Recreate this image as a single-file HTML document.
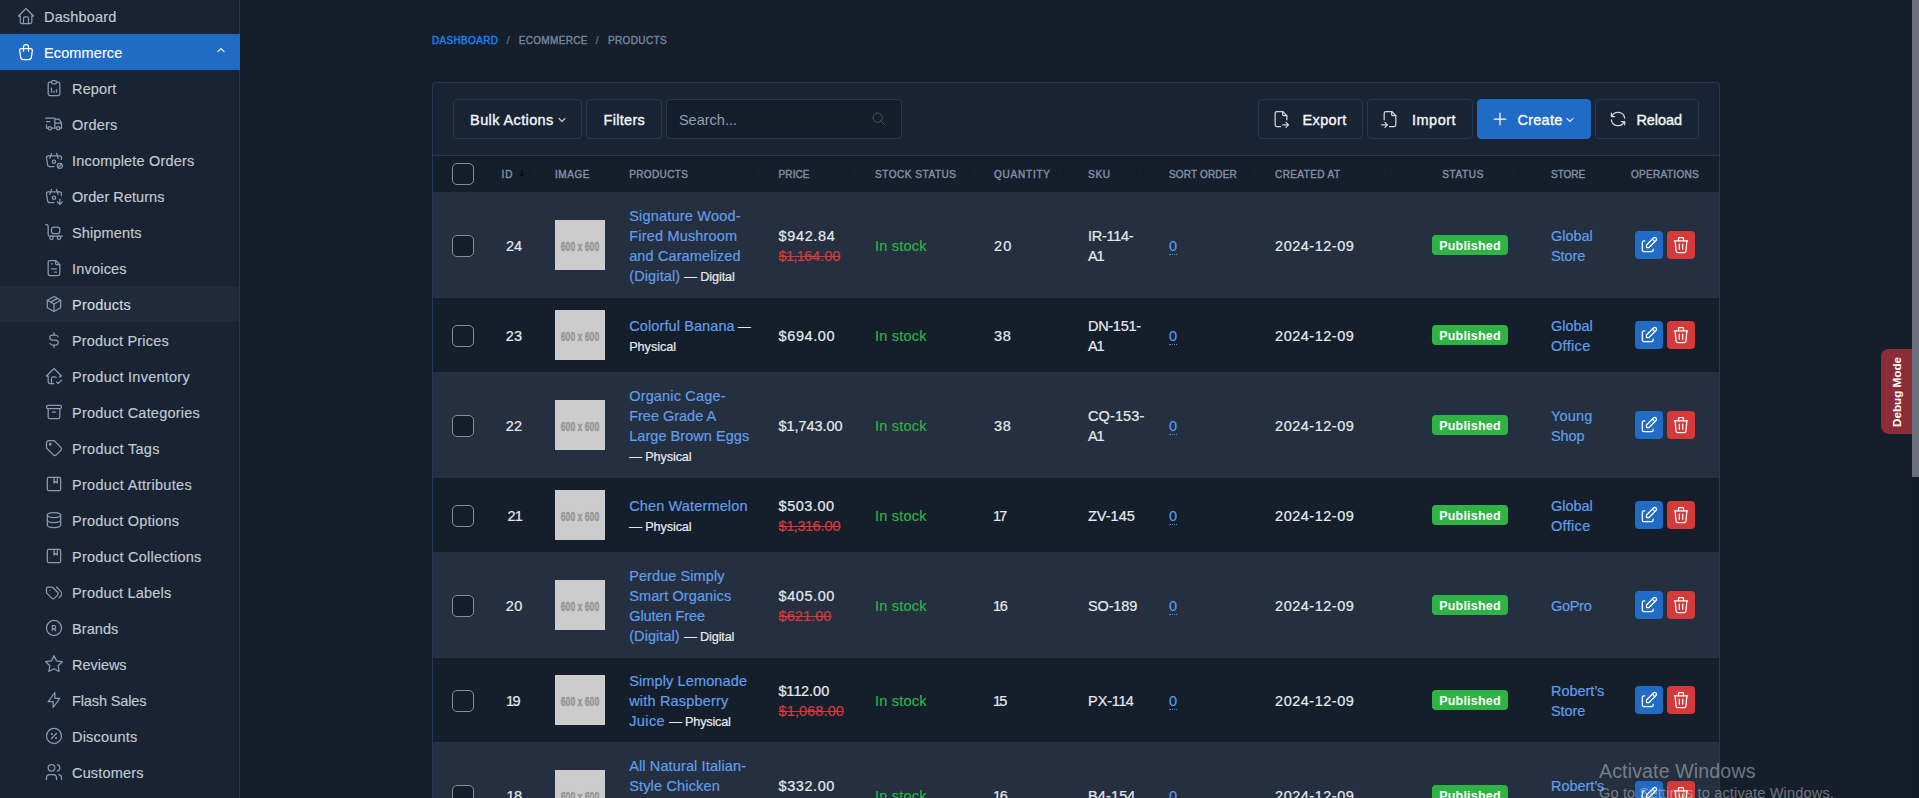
<!DOCTYPE html>
<html lang="en">
<head>
<meta charset="utf-8">
<title>Products</title>
<style>
*{box-sizing:border-box;margin:0;padding:0}
html,body{width:1919px;height:798px;overflow:hidden;background:#151f2c}
body{font-family:"Liberation Sans",sans-serif;font-size:14.5px;color:#dce1e7;position:relative;-webkit-font-smoothing:antialiased}
svg.ic{display:block;flex:none}
i{font-style:normal}
/* sidebar */
#sb{position:absolute;left:0;top:0;width:240px;height:798px;background:#182433;border-right:1px solid #25384f;overflow:visible}
.nav{position:absolute;left:0;width:240px;height:36px;display:flex;align-items:center;color:#c3c9d2;-webkit-text-stroke-width:0.15px;white-space:nowrap;font-size:14.5px}
.nav svg{color:#8c99ae;margin-right:8px}
.nav.top{padding-left:16px}
.nav.sub{padding-left:44px;width:239px}
.nav.act{background:#206bc4;color:#fff}
.nav.act svg{color:#fff}
.nav.act svg.chev{position:absolute;left:214.7px;top:10.3px;margin:0;opacity:.85}
.nav.cur{background:#1f2b3b;color:#d3d8df}
.nav span{position:relative;top:0.5px}
/* breadcrumb */
.bc{position:absolute;top:32.9px;height:16px;line-height:16px;font-size:10px;font-weight:normal;-webkit-text-stroke-width:0.4px;color:#74839c;white-space:nowrap}
.bc.a{color:#1883f6}
.bc.s{font-weight:normal;-webkit-text-stroke-width:0;font-size:11.5px;top:32.4px}
/* card */
#card{position:absolute;left:432px;top:82px;width:1288px;height:780px;background:#182433;border:1px solid #25384f;border-radius:4px;overflow:hidden}
#hd{position:absolute;left:0;top:0;width:1286px;height:73px;border-bottom:1px solid #25384f}
.btn{position:absolute;top:16px;height:40px;border:1px solid #25384f;border-radius:4px;background:#182433;color:#f4f6f8;font-weight:normal;-webkit-text-stroke:0.36px #f4f6f8;font-size:14.5px;white-space:nowrap}
.btn>span{position:absolute;top:0;line-height:41px}
.btn>svg{position:absolute}
.btn.pri{background:#206bc4;border-color:#206bc4;color:#fff}
#thead{position:absolute;left:0;top:73px;width:1286px;height:36px;background:#151f2c}
.th{position:absolute;top:0;height:36px;line-height:37.6px;font-size:10px;font-weight:normal;-webkit-text-stroke-width:0.4px;color:#8190a7;white-space:nowrap}
.cb{display:block;width:22px;height:22px;border:1px solid #868e9b;border-radius:5px;background:#151f2c}
.tr{position:absolute;left:0;width:1286px;color:#e6eaef;-webkit-text-stroke-width:0.2px}
.tr.odd{background:#242f3f}
.tr.even{background:#151f2c}
.td{position:absolute;top:0;height:100%;display:flex;align-items:center;white-space:nowrap;padding-top:2px}
.td.col{flex-direction:column;align-items:flex-start;justify-content:center}
.l{height:20px;line-height:20px;display:block;white-space:nowrap}
.lk{color:#619de8}
.ty{color:#e6e9ed;font-size:12.7px}
.ok{color:#2fb344}
.old{color:#d63939;text-decoration:line-through}
.ed{color:#5e9ae6;border-bottom:1px dotted #4f86cf;line-height:18px;height:18.5px;display:inline-block}
.thumb{display:flex;width:50px;height:50px;background:#cccccc;align-items:center;justify-content:center;margin-top:-2px}
.thumb span{-webkit-text-stroke-width:0.5px;font-size:12.6px;font-weight:bold;color:#969696;-webkit-text-stroke:0.5px #969696;letter-spacing:0;word-spacing:0;transform:scaleX(.685);white-space:nowrap;position:relative;top:1.7px;left:-0.3px}
.badge{-webkit-text-stroke-width:0;display:flex;width:76px;height:20px;border-radius:4px;background:#2fb344;color:#fff;font-weight:bold;font-size:12.5px;align-items:center;justify-content:center;margin-top:-3px;padding-top:2px}
.ob{display:flex;width:28px;height:28px;border-radius:4px;align-items:center;justify-content:center;color:#fff;margin-top:-3px}
.ob.b{background:#206bc4}
.ob.r{background:#d63939;margin-left:4px}
/* misc */
#dbg{position:absolute;left:1881px;top:349px;width:31px;height:85px;background:#8b2d37;border-radius:8px 0 0 8px}
#dbg span{position:absolute;left:-19.5px;top:35px;width:70px;height:16px;line-height:16px;text-align:center;transform:rotate(-90deg);color:#fff;font-weight:bold;font-size:11.7px;white-space:nowrap}
#scr{position:absolute;left:1912px;top:0;width:7px;height:798px;background:#121a26}
#scr i{position:absolute;left:0;top:0;width:7px;height:477px;background:#6b717c}
.wm{position:absolute;left:1599px;color:rgba(225,225,225,.45);white-space:nowrap;z-index:5}
</style>
</head>
<body>
<div id="sb">
<div class="nav top" style="top:-2px"><svg class="ic " width="20" height="20" viewBox="0 0 24 24" fill="none" stroke="currentColor" stroke-width="1.5" stroke-linecap="round" stroke-linejoin="round" style=""><path d="M5 12l-2 0l9 -9l9 9l-2 0"/><path d="M5 12v7a2 2 0 0 0 2 2h10a2 2 0 0 0 2 -2v-7"/><path d="M9 21v-6a2 2 0 0 1 2 -2h2a2 2 0 0 1 2 2v6"/></svg><span style="letter-spacing:0.158px;">Dashboard</span></div>
<div class="nav top act" style="top:34px"><svg class="ic " width="20" height="20" viewBox="0 0 24 24" fill="none" stroke="currentColor" stroke-width="1.5" stroke-linecap="round" stroke-linejoin="round" style=""><path d="M6.331 8h11.339a2 2 0 0 1 1.977 2.304l-1.255 8.152a3 3 0 0 1 -2.966 2.544h-6.852a3 3 0 0 1 -2.965 -2.544l-1.255 -8.152a2 2 0 0 1 1.977 -2.304z"/><path d="M9 11v-5a3 3 0 0 1 6 0v5"/></svg><span style="letter-spacing:0.119px;">Ecommerce</span><svg class="ic chev" width="12" height="12" viewBox="0 0 24 24" fill="none" stroke="currentColor" stroke-width="2.4" stroke-linecap="round" stroke-linejoin="round" style=""><path d="M6 15l6 -6l6 6"/></svg></div>
<div class="nav sub" style="top:70px"><svg class="ic " width="20" height="20" viewBox="0 0 24 24" fill="none" stroke="currentColor" stroke-width="1.5" stroke-linecap="round" stroke-linejoin="round" style=""><path d="M9 5h-2a2 2 0 0 0 -2 2v12a2 2 0 0 0 2 2h10a2 2 0 0 0 2 -2v-12a2 2 0 0 0 -2 -2h-2"/><path d="M9 3m0 2a2 2 0 0 1 2 -2h2a2 2 0 0 1 2 2v0a2 2 0 0 1 -2 2h-2a2 2 0 0 1 -2 -2z"/><path d="M9 17v-5"/><path d="M12 17v-1"/><path d="M15 17v-3"/></svg><span style="letter-spacing:0.156px;">Report</span></div>
<div class="nav sub" style="top:106px"><svg class="ic " width="20" height="20" viewBox="0 0 24 24" fill="none" stroke="currentColor" stroke-width="1.5" stroke-linecap="round" stroke-linejoin="round" style=""><path d="M7 17m-2 0a2 2 0 1 0 4 0a2 2 0 1 0 -4 0"/><path d="M17 17m-2 0a2 2 0 1 0 4 0a2 2 0 1 0 -4 0"/><path d="M5 17h-2v-4m-1 -8h11v12m-4 0h6m4 0h2v-6h-8m0 -5h5l3 5"/><path d="M3 9l4 0"/></svg><span style="letter-spacing:0.177px;">Orders</span></div>
<div class="nav sub" style="top:142px"><svg class="ic " width="20" height="20" viewBox="0 0 24 24" fill="none" stroke="currentColor" stroke-width="1.5" stroke-linecap="round" stroke-linejoin="round" style=""><path d="M17 10l-2 -6"/><path d="M7 10l2 -6"/><path d="M12 20h-4.756a3 3 0 0 1 -2.965 -2.544l-1.255 -8.152a2 2 0 0 1 1.977 -2.304h13.999a2 2 0 0 1 1.977 2.304l-.3 1.948"/><path d="M10 14a2 2 0 1 0 4 0a2 2 0 0 0 -4 0"/><path d="M19 19m-3 0a3 3 0 1 0 6 0a3 3 0 1 0 -6 0"/><path d="M17 21l4 -4"/></svg><span style="letter-spacing:0.183px;">Incomplete Orders</span></div>
<div class="nav sub" style="top:178px"><svg class="ic " width="20" height="20" viewBox="0 0 24 24" fill="none" stroke="currentColor" stroke-width="1.5" stroke-linecap="round" stroke-linejoin="round" style=""><path d="M17 10l-2 -6"/><path d="M7 10l2 -6"/><path d="M12 20h-4.756a3 3 0 0 1 -2.965 -2.544l-1.255 -8.152a2 2 0 0 1 1.977 -2.304h13.999a2 2 0 0 1 1.977 2.304l-.349 2.271"/><path d="M10 14a2 2 0 1 0 4 0a2 2 0 0 0 -4 0"/><path d="M19 16v6"/><path d="M22 19l-3 3l-3 -3"/></svg><span style="letter-spacing:0.045px;">Order Returns</span></div>
<div class="nav sub" style="top:214px"><svg class="ic " width="20" height="20" viewBox="0 0 24 24" fill="none" stroke="currentColor" stroke-width="1.5" stroke-linecap="round" stroke-linejoin="round" style=""><path d="M2 3h1a2 2 0 0 1 2 2v10a2 2 0 0 0 2 2h15"/><path d="M9 6m0 3a3 3 0 0 1 3 -3h4a3 3 0 0 1 3 3v2a3 3 0 0 1 -3 3h-4a3 3 0 0 1 -3 -3z"/><path d="M9 19m-2 0a2 2 0 1 0 4 0a2 2 0 1 0 -4 0"/><path d="M18 19m-2 0a2 2 0 1 0 4 0a2 2 0 1 0 -4 0"/></svg><span style="letter-spacing:0.137px;">Shipments</span></div>
<div class="nav sub" style="top:250px"><svg class="ic " width="20" height="20" viewBox="0 0 24 24" fill="none" stroke="currentColor" stroke-width="1.5" stroke-linecap="round" stroke-linejoin="round" style=""><path d="M14 3v4a1 1 0 0 0 1 1h4"/><path d="M17 21h-10a2 2 0 0 1 -2 -2v-14a2 2 0 0 1 2 -2h7l5 5v11a2 2 0 0 1 -2 2z"/><path d="M9 7l1 0"/><path d="M9 13l6 0"/><path d="M13 17l2 0"/></svg><span style="letter-spacing:0.201px;">Invoices</span></div>
<div class="nav sub cur" style="top:286px"><svg class="ic " width="20" height="20" viewBox="0 0 24 24" fill="none" stroke="currentColor" stroke-width="1.5" stroke-linecap="round" stroke-linejoin="round" style=""><path d="M12 3l8 4.5l0 9l-8 4.5l-8 -4.5l0 -9l8 -4.5"/><path d="M12 12l8 -4.5"/><path d="M12 12l0 9"/><path d="M12 12l-8 -4.5"/><path d="M16 5.25l-8 4.5"/></svg><span style="letter-spacing:0.225px;">Products</span></div>
<div class="nav sub" style="top:322px"><svg class="ic " width="20" height="20" viewBox="0 0 24 24" fill="none" stroke="currentColor" stroke-width="1.5" stroke-linecap="round" stroke-linejoin="round" style=""><path d="M16.7 8a3 3 0 0 0 -2.7 -2h-4a3 3 0 0 0 0 6h4a3 3 0 0 1 0 6h-4a3 3 0 0 1 -2.7 -2"/><path d="M12 3v3m0 12v3"/></svg><span style="letter-spacing:0.186px;">Product Prices</span></div>
<div class="nav sub" style="top:358px"><svg class="ic " width="20" height="20" viewBox="0 0 24 24" fill="none" stroke="currentColor" stroke-width="1.5" stroke-linecap="round" stroke-linejoin="round" style=""><path d="M9 21v-6a2 2 0 0 1 2 -2h2c.641 0 1.212 .302 1.578 .771"/><path d="M19 13.488v-1.488h2l-9 -9l-9 9h2v7a2 2 0 0 0 2 2h4.525"/><path d="M15 19l2 2l4 -4"/></svg><span style="letter-spacing:0.254px;">Product Inventory</span></div>
<div class="nav sub" style="top:394px"><svg class="ic " width="20" height="20" viewBox="0 0 24 24" fill="none" stroke="currentColor" stroke-width="1.5" stroke-linecap="round" stroke-linejoin="round" style=""><path d="M3 4m0 2a2 2 0 0 1 2 -2h14a2 2 0 0 1 2 2v0a2 2 0 0 1 -2 2h-14a2 2 0 0 1 -2 -2z"/><path d="M5 8v10a2 2 0 0 0 2 2h10a2 2 0 0 0 2 -2v-10"/><path d="M10 12l4 0"/></svg><span style="letter-spacing:0.210px;">Product Categories</span></div>
<div class="nav sub" style="top:430px"><svg class="ic " width="20" height="20" viewBox="0 0 24 24" fill="none" stroke="currentColor" stroke-width="1.5" stroke-linecap="round" stroke-linejoin="round" style=""><path d="M7.5 7.5m-1 0a1 1 0 1 0 2 0a1 1 0 1 0 -2 0"/><path d="M3 6v5.172a2 2 0 0 0 .586 1.414l7.71 7.71a2.41 2.41 0 0 0 3.408 0l5.592 -5.592a2.41 2.41 0 0 0 0 -3.408l-7.71 -7.71a2 2 0 0 0 -1.414 -.586h-5.172a3 3 0 0 0 -3 3z"/></svg><span style="letter-spacing:0.276px;">Product Tags</span></div>
<div class="nav sub" style="top:466px"><svg class="ic " width="20" height="20" viewBox="0 0 24 24" fill="none" stroke="currentColor" stroke-width="1.5" stroke-linecap="round" stroke-linejoin="round" style=""><path d="M4 4m0 2a2 2 0 0 1 2 -2h12a2 2 0 0 1 2 2v12a2 2 0 0 1 -2 2h-12a2 2 0 0 1 -2 -2z"/><path d="M12 4v7l2 -2l2 2v-7"/></svg><span style="letter-spacing:0.309px;">Product Attributes</span></div>
<div class="nav sub" style="top:502px"><svg class="ic " width="20" height="20" viewBox="0 0 24 24" fill="none" stroke="currentColor" stroke-width="1.5" stroke-linecap="round" stroke-linejoin="round" style=""><path d="M12 6m-8 0a8 3 0 1 0 16 0a8 3 0 1 0 -16 0"/><path d="M4 6v6a8 3 0 0 0 16 0v-6"/><path d="M4 12v6a8 3 0 0 0 16 0v-6"/></svg><span style="letter-spacing:0.216px;">Product Options</span></div>
<div class="nav sub" style="top:538px"><svg class="ic " width="20" height="20" viewBox="0 0 24 24" fill="none" stroke="currentColor" stroke-width="1.5" stroke-linecap="round" stroke-linejoin="round" style=""><path d="M4 4m0 2a2 2 0 0 1 2 -2h12a2 2 0 0 1 2 2v12a2 2 0 0 1 -2 2h-12a2 2 0 0 1 -2 -2z"/><path d="M12 4v7l2 -2l2 2v-7"/></svg><span style="letter-spacing:0.243px;">Product Collections</span></div>
<div class="nav sub" style="top:574px"><svg class="ic " width="20" height="20" viewBox="0 0 24 24" fill="none" stroke="currentColor" stroke-width="1.5" stroke-linecap="round" stroke-linejoin="round" style=""><path d="M3 8v4.172a2 2 0 0 0 .586 1.414l5.71 5.71a2.41 2.41 0 0 0 3.408 0l3.592 -3.592a2.41 2.41 0 0 0 0 -3.408l-5.71 -5.71a2 2 0 0 0 -1.414 -.586h-4.172a2 2 0 0 0 -2 2z"/><path d="M18 19l1.592 -1.592a4.82 4.82 0 0 0 0 -6.816l-4.592 -4.592"/><path d="M7 10h-.01"/></svg><span style="letter-spacing:0.190px;">Product Labels</span></div>
<div class="nav sub" style="top:610px"><svg class="ic " width="20" height="20" viewBox="0 0 24 24" fill="none" stroke="currentColor" stroke-width="1.5" stroke-linecap="round" stroke-linejoin="round" style=""><path d="M12 12m-9 0a9 9 0 1 0 18 0a9 9 0 1 0 -18 0"/><path d="M10 15v-6h2a2 2 0 1 1 0 4h-2"/><path d="M14 15l-2 -2"/></svg><span style="letter-spacing:0.071px;">Brands</span></div>
<div class="nav sub" style="top:646px"><svg class="ic " width="20" height="20" viewBox="0 0 24 24" fill="none" stroke="currentColor" stroke-width="1.5" stroke-linecap="round" stroke-linejoin="round" style=""><path d="M12 17.75l-6.172 3.245l1.179 -6.873l-5 -4.867l6.9 -1l3.086 -6.253l3.086 6.253l6.9 1l-5 4.867l1.179 6.873z"/></svg><span style="letter-spacing:-0.032px;">Reviews</span></div>
<div class="nav sub" style="top:682px"><svg class="ic " width="20" height="20" viewBox="0 0 24 24" fill="none" stroke="currentColor" stroke-width="1.5" stroke-linecap="round" stroke-linejoin="round" style=""><path d="M13 3l0 7l6 0l-8 11l0 -7l-6 0l8 -11"/></svg><span style="letter-spacing:-0.126px;">Flash Sales</span></div>
<div class="nav sub" style="top:718px"><svg class="ic " width="20" height="20" viewBox="0 0 24 24" fill="none" stroke="currentColor" stroke-width="1.5" stroke-linecap="round" stroke-linejoin="round" style=""><path d="M9 15l6 -6"/><circle cx="9.5" cy="9.5" r=".5" fill="currentColor"/><circle cx="14.5" cy="14.5" r=".5" fill="currentColor"/><path d="M12 12m-9 0a9 9 0 1 0 18 0a9 9 0 1 0 -18 0"/></svg><span style="letter-spacing:0.192px;">Discounts</span></div>
<div class="nav sub" style="top:754px"><svg class="ic " width="20" height="20" viewBox="0 0 24 24" fill="none" stroke="currentColor" stroke-width="1.5" stroke-linecap="round" stroke-linejoin="round" style=""><path d="M9 7m-4 0a4 4 0 1 0 8 0a4 4 0 1 0 -8 0"/><path d="M3 21v-2a4 4 0 0 1 4 -4h4a4 4 0 0 1 4 4v2"/><path d="M16 3.13a4 4 0 0 1 0 7.75"/><path d="M21 21v-2a4 4 0 0 0 -3 -3.85"/></svg><span style="letter-spacing:0.162px;">Customers</span></div>
<div class="nav sub" style="top:790px"><svg class="ic " width="20" height="20" viewBox="0 0 24 24" fill="none" stroke="currentColor" stroke-width="1.5" stroke-linecap="round" stroke-linejoin="round" style=""><path d="M17 10l-2 -6"/><path d="M7 10l2 -6"/><path d="M12 20h-4.756a3 3 0 0 1 -2.965 -2.544l-1.255 -8.152a2 2 0 0 1 1.977 -2.304h13.999a2 2 0 0 1 1.977 2.304l-.3 1.948"/><path d="M10 14a2 2 0 1 0 4 0a2 2 0 0 0 -4 0"/><path d="M19 19m-3 0a3 3 0 1 0 6 0a3 3 0 1 0 -6 0"/><path d="M17 21l4 -4"/></svg><span style="letter-spacing:-0.300px;">Abandoned Carts</span></div>
</div>
<div class="bc a" style="left:432px"><span style="letter-spacing:0.332px;">DASHBOARD</span></div>
<div class="bc s" style="left:506.4px">/</div>
<div class="bc" style="left:518.7px"><span style="letter-spacing:0.323px;">ECOMMERCE</span></div>
<div class="bc s" style="left:595.6px">/</div>
<div class="bc" style="left:608px"><span style="letter-spacing:0.355px;">PRODUCTS</span></div>
<div id="card">
 <div id="hd">
  <div class="btn" style="left:20px;width:129px"><span style="left:16.1px"><span style="letter-spacing:0.383px;">Bulk Actions</span></span><span style="left:102.2px;top:14.3px;line-height:0;opacity:.75"><svg class="ic " width="12" height="12" viewBox="0 0 24 24" fill="none" stroke="currentColor" stroke-width="2.4" stroke-linecap="round" stroke-linejoin="round" style=""><path d="M6 9l6 6l6 -6"/></svg></span></div>
  <div class="btn" style="left:153px;width:76px"><span style="left:16.5px"><span style="letter-spacing:0.305px;">Filters</span></span></div>
  <div class="btn" style="left:233px;width:236px;background:#151f2c;font-weight:normal;-webkit-text-stroke:0;color:#919eb3"><span style="left:11.9px"><span style="letter-spacing:0.009px;">Search...</span></span><span style="left:203.9px;top:10.5px;line-height:0;color:#4a4f58"><svg class="ic " width="16" height="16" viewBox="0 0 24 24" fill="none" stroke="currentColor" stroke-width="1.5" stroke-linecap="round" stroke-linejoin="round" style=""><path d="M10 10m-7 0a7 7 0 1 0 14 0a7 7 0 1 0 -14 0"/><path d="M21 21l-6 -6"/></svg></span></div>
  <div class="btn" style="left:825px;width:105px"><span style="left:12.3px;top:9px;line-height:0;color:#d2d6dc"><svg class="ic " width="20" height="20" viewBox="0 0 24 24" fill="none" stroke="currentColor" stroke-width="1.5" stroke-linecap="round" stroke-linejoin="round" style=""><path d="M14 3v4a1 1 0 0 0 1 1h4"/><path d="M11.5 21h-4.500a2 2 0 0 1 -2 -2v-14a2 2 0 0 1 2 -2h7l5 5v5m-5 6h7m-3 -3l3 3l-3 3"/></svg></span><span style="left:43.5px"><span style="letter-spacing:0.379px;">Export</span></span></div>
  <div class="btn" style="left:934px;width:106px"><span style="left:11.8px;top:9px;line-height:0;color:#d2d6dc"><svg class="ic " width="20" height="20" viewBox="0 0 24 24" fill="none" stroke="currentColor" stroke-width="1.5" stroke-linecap="round" stroke-linejoin="round" style=""><path d="M14 3v4a1 1 0 0 0 1 1h4"/><path d="M5 13v-8a2 2 0 0 1 2 -2h7l5 5v11a2 2 0 0 1 -2 2h-5.500m-9.500 -2h7m-3 -3l3 3l-3 3"/></svg></span><span style="left:44px"><span style="letter-spacing:0.501px;">Import</span></span></div>
  <div class="btn pri" style="left:1044px;width:114px"><span style="left:12px;top:9px;line-height:0"><svg class="ic " width="20" height="20" viewBox="0 0 24 24" fill="none" stroke="currentColor" stroke-width="1.5" stroke-linecap="round" stroke-linejoin="round" style=""><path d="M12 5l0 14"/><path d="M5 12l14 0"/></svg></span><span style="left:39.6px"><span style="letter-spacing:0.216px;">Create</span></span><span style="left:86.4px;top:14.2px;line-height:0;opacity:.8"><svg class="ic " width="12" height="12" viewBox="0 0 24 24" fill="none" stroke="currentColor" stroke-width="2.4" stroke-linecap="round" stroke-linejoin="round" style=""><path d="M6 9l6 6l6 -6"/></svg></span></div>
  <div class="btn" style="left:1162px;width:104px"><span style="left:11.5px;top:9px;line-height:0;color:#d2d6dc"><svg class="ic " width="20" height="20" viewBox="0 0 24 24" fill="none" stroke="currentColor" stroke-width="1.5" stroke-linecap="round" stroke-linejoin="round" style=""><path d="M20 11a8.100 8.100 0 0 0 -15.500 -2m-.5 -4v4h4"/><path d="M4 13a8.100 8.100 0 0 0 15.500 2m.5 4v-4h-4"/></svg></span><span style="left:40.4px"><span style="letter-spacing:-0.070px;">Reload</span></span></div>
 </div>
 <div id="thead">
  <div class="th" style="left:19px;display:flex;align-items:center"><span class="cb" style="background:#151f2c"></span></div>
<div class="th" style="left:68.5px"><span style="letter-spacing:1.000px;">ID</span></div>
<div class="th" style="left:122.0px"><span style="letter-spacing:0.568px;">IMAGE</span></div>
<div class="th" style="left:196.2px"><span style="letter-spacing:0.384px;">PRODUCTS</span></div>
<div class="th" style="left:345.6px"><span style="letter-spacing:0.085px;">PRICE</span></div>
<div class="th" style="left:442.1px"><span style="letter-spacing:0.535px;">STOCK STATUS</span></div>
<div class="th" style="left:561.0px"><span style="letter-spacing:0.778px;">QUANTITY</span></div>
<div class="th" style="left:655.0px"><span style="letter-spacing:0.719px;">SKU</span></div>
<div class="th" style="left:736.0px"><span style="letter-spacing:0.155px;">SORT ORDER</span></div>
<div class="th" style="left:842.0px"><span style="letter-spacing:0.411px;">CREATED AT</span></div>
<div class="th" style="left:1009.3px"><span style="letter-spacing:0.607px;">STATUS</span></div>
<div class="th" style="left:1118.0px"><span style="letter-spacing:-0.017px;">STORE</span></div>
<div class="th" style="left:1198.0px"><span style="letter-spacing:0.319px;">OPERATIONS</span></div>
  <svg style="position:absolute;left:85.6px;top:12.6px" width="6" height="8" viewBox="0 0 6 8"><path d="M3 0.4V7.2M0.6 4.8L3 7.2L5.4 4.8" stroke="#04070b" stroke-width="1.15" fill="none"/></svg>
  <svg style="position:absolute;left:92.6px;top:14.6px;opacity:.16" width="6" height="8" viewBox="0 0 6 8"><path d="M3 7.6V0.8M0.6 3.2L3 0.8L5.4 3.2" stroke="#04070b" stroke-width="1.15" fill="none"/></svg>
  <svg style="position:absolute;left:310px;top:13px;opacity:.14" width="14" height="9" viewBox="0 0 14 9"><path d="M3 0.4V7.2M0.6 4.8L3 7.2L5.4 4.8M10 8.6V1.8M7.6 4.2L10 1.8L12.4 4.2" stroke="#04070b" stroke-width="1.15" fill="none"/></svg>
  <svg style="position:absolute;left:407px;top:13px;opacity:.14" width="14" height="9" viewBox="0 0 14 9"><path d="M3 0.4V7.2M0.6 4.8L3 7.2L5.4 4.8M10 8.6V1.8M7.6 4.2L10 1.8L12.4 4.2" stroke="#04070b" stroke-width="1.15" fill="none"/></svg>
  <svg style="position:absolute;left:526px;top:13px;opacity:.14" width="14" height="9" viewBox="0 0 14 9"><path d="M3 0.4V7.2M0.6 4.8L3 7.2L5.4 4.8M10 8.6V1.8M7.6 4.2L10 1.8L12.4 4.2" stroke="#04070b" stroke-width="1.15" fill="none"/></svg>
  <svg style="position:absolute;left:620px;top:13px;opacity:.14" width="14" height="9" viewBox="0 0 14 9"><path d="M3 0.4V7.2M0.6 4.8L3 7.2L5.4 4.8M10 8.6V1.8M7.6 4.2L10 1.8L12.4 4.2" stroke="#04070b" stroke-width="1.15" fill="none"/></svg>
  <svg style="position:absolute;left:701px;top:13px;opacity:.14" width="14" height="9" viewBox="0 0 14 9"><path d="M3 0.4V7.2M0.6 4.8L3 7.2L5.4 4.8M10 8.6V1.8M7.6 4.2L10 1.8L12.4 4.2" stroke="#04070b" stroke-width="1.15" fill="none"/></svg>
  <svg style="position:absolute;left:807px;top:13px;opacity:.14" width="14" height="9" viewBox="0 0 14 9"><path d="M3 0.4V7.2M0.6 4.8L3 7.2L5.4 4.8M10 8.6V1.8M7.6 4.2L10 1.8L12.4 4.2" stroke="#04070b" stroke-width="1.15" fill="none"/></svg>
  <svg style="position:absolute;left:945px;top:13px;opacity:.14" width="14" height="9" viewBox="0 0 14 9"><path d="M3 0.4V7.2M0.6 4.8L3 7.2L5.4 4.8M10 8.6V1.8M7.6 4.2L10 1.8L12.4 4.2" stroke="#04070b" stroke-width="1.15" fill="none"/></svg>
  <svg style="position:absolute;left:1083px;top:13px;opacity:.14" width="14" height="9" viewBox="0 0 14 9"><path d="M3 0.4V7.2M0.6 4.8L3 7.2L5.4 4.8M10 8.6V1.8M7.6 4.2L10 1.8L12.4 4.2" stroke="#04070b" stroke-width="1.15" fill="none"/></svg>
 </div>
<div class="tr odd" style="top:109px;height:106px"><div class="td" style="left:19px"><span class="cb"></span></div><div class="td" style="left:72.9px"><span style="letter-spacing:-0.029px;">24</span></div><div class="td" style="left:122px"><span class="thumb"><span>600 x 600</span></span></div><div class="td col" style="left:196.2px"><div class="l"><span class="lk" style="letter-spacing:0.197px;">Signature Wood-</span></div><div class="l"><span class="lk" style="letter-spacing:0.188px;">Fired Mushroom</span></div><div class="l"><span class="lk" style="letter-spacing:0.120px;">and Caramelized</span></div><div class="l"><span class="lk" style="letter-spacing:0.131px;">(Digital)</span><span class="ty" style="letter-spacing:-0.127px;margin-left:4px;">— Digital</span></div></div><div class="td col" style="left:345.6px"><div class="l"><span style="letter-spacing:0.631px;">$942.84</span></div><div class="l"><span class="old">$<i style="margin:0 -0.87px 0 -0.58px">1</i>,<i style="margin:0 -0.87px 0 -0.58px">1</i>64.00</span></div></div><div class="td" style="left:442.0px"><span class="ok" style="letter-spacing:0.219px;">In stock</span></div><div class="td" style="left:561.0px"><span style="letter-spacing:1.171px;">20</span></div><div class="td col" style="left:655.0px"><div class="l"><span style="letter-spacing:-0.262px;">IR-114-</span></div><div class="l"><span style="letter-spacing:-0.236px;">A<i style="margin:0 -1.56px 0 -1.04px">1</i></span></div></div><div class="td" style="left:736.0px"><span class="ed"><span>0</span></span></div><div class="td" style="left:842.1px"><span style="letter-spacing:0.503px;">2024-12-09</span></div><div class="td" style="left:999.0px"><span class="badge"><span style="letter-spacing:0.221px;">Published</span></span></div><div class="td col" style="left:1118.0px"><div class="l"><span class="lk" style="letter-spacing:-0.023px;">Global</span></div><div class="l"><span class="lk" style="letter-spacing:-0.089px;">Store</span></div></div><div class="td" style="left:1202.0px"><span class="ob b"><svg class="ic " width="20" height="20" viewBox="0 0 24 24" fill="none" stroke="currentColor" stroke-width="1.5" stroke-linecap="round" stroke-linejoin="round" style=""><path d="M7 7h-1a2 2 0 0 0 -2 2v9a2 2 0 0 0 2 2h9a2 2 0 0 0 2 -2v-1"/><path d="M20.385 6.585a2.100 2.100 0 0 0 -2.970 -2.970l-8.415 8.385v3h3l8.385 -8.415z"/><path d="M16 5l3 3"/></svg></span><span class="ob r"><svg class="ic " width="20" height="20" viewBox="0 0 24 24" fill="none" stroke="currentColor" stroke-width="1.5" stroke-linecap="round" stroke-linejoin="round" style=""><path d="M4 7l16 0"/><path d="M10 11l0 6"/><path d="M14 11l0 6"/><path d="M5 7l1 12a2 2 0 0 0 2 2h8a2 2 0 0 0 2 -2l1 -12"/><path d="M9 7v-3a1 1 0 0 1 1 -1h4a1 1 0 0 1 1 1v3"/></svg></span></div></div>
<div class="tr even" style="top:215px;height:74px"><div class="td" style="left:19px"><span class="cb"></span></div><div class="td" style="left:72.8px"><span style="letter-spacing:0.071px;">23</span></div><div class="td" style="left:122px"><span class="thumb"><span>600 x 600</span></span></div><div class="td col" style="left:196.2px"><div class="l"><span class="lk" style="letter-spacing:0.108px;">Colorful Banana</span><span class="ty" style="margin-left:3.3px;">—</span></div><div class="l"><span class="ty" style="letter-spacing:-0.041px;margin-left:0px;">Physical</span></div></div><div class="td col" style="left:345.6px"><div class="l"><span style="letter-spacing:0.581px;">$694.00</span></div></div><div class="td" style="left:442.0px"><span class="ok" style="letter-spacing:0.219px;">In stock</span></div><div class="td" style="left:561.0px"><span style="letter-spacing:0.771px;">38</span></div><div class="td col" style="left:655.0px"><div class="l"><span style="letter-spacing:-0.299px;">DN-151-</span></div><div class="l"><span style="letter-spacing:-0.236px;">A<i style="margin:0 -1.56px 0 -1.04px">1</i></span></div></div><div class="td" style="left:736.0px"><span class="ed"><span>0</span></span></div><div class="td" style="left:842.1px"><span style="letter-spacing:0.503px;">2024-12-09</span></div><div class="td" style="left:999.0px"><span class="badge"><span style="letter-spacing:0.221px;">Published</span></span></div><div class="td col" style="left:1118.0px"><div class="l"><span class="lk" style="letter-spacing:-0.023px;">Global</span></div><div class="l"><span class="lk" style="letter-spacing:0.318px;">Office</span></div></div><div class="td" style="left:1202.0px"><span class="ob b"><svg class="ic " width="20" height="20" viewBox="0 0 24 24" fill="none" stroke="currentColor" stroke-width="1.5" stroke-linecap="round" stroke-linejoin="round" style=""><path d="M7 7h-1a2 2 0 0 0 -2 2v9a2 2 0 0 0 2 2h9a2 2 0 0 0 2 -2v-1"/><path d="M20.385 6.585a2.100 2.100 0 0 0 -2.970 -2.970l-8.415 8.385v3h3l8.385 -8.415z"/><path d="M16 5l3 3"/></svg></span><span class="ob r"><svg class="ic " width="20" height="20" viewBox="0 0 24 24" fill="none" stroke="currentColor" stroke-width="1.5" stroke-linecap="round" stroke-linejoin="round" style=""><path d="M4 7l16 0"/><path d="M10 11l0 6"/><path d="M14 11l0 6"/><path d="M5 7l1 12a2 2 0 0 0 2 2h8a2 2 0 0 0 2 -2l1 -12"/><path d="M9 7v-3a1 1 0 0 1 1 -1h4a1 1 0 0 1 1 1v3"/></svg></span></div></div>
<div class="tr odd" style="top:289px;height:106px"><div class="td" style="left:19px"><span class="cb"></span></div><div class="td" style="left:72.8px"><span style="letter-spacing:0.071px;">22</span></div><div class="td" style="left:122px"><span class="thumb"><span>600 x 600</span></span></div><div class="td col" style="left:196.2px"><div class="l"><span class="lk" style="letter-spacing:0.167px;">Organic Cage-</span></div><div class="l"><span class="lk" style="letter-spacing:-0.013px;">Free Grade A</span></div><div class="l"><span class="lk" style="letter-spacing:0.047px;">Large Brown Eggs</span></div><div class="l"><span class="ty" style="letter-spacing:-0.113px;margin-left:0px;">— Physical</span></div></div><div class="td col" style="left:345.6px"><div class="l"><span style="letter-spacing:-0.063px;">$1,743.00</span></div></div><div class="td" style="left:442.0px"><span class="ok" style="letter-spacing:0.219px;">In stock</span></div><div class="td" style="left:561.0px"><span style="letter-spacing:0.771px;">38</span></div><div class="td col" style="left:655.0px"><div class="l"><span style="letter-spacing:0.117px;">CQ-153-</span></div><div class="l"><span style="letter-spacing:-0.236px;">A<i style="margin:0 -1.56px 0 -1.04px">1</i></span></div></div><div class="td" style="left:736.0px"><span class="ed"><span>0</span></span></div><div class="td" style="left:842.1px"><span style="letter-spacing:0.503px;">2024-12-09</span></div><div class="td" style="left:999.0px"><span class="badge"><span style="letter-spacing:0.221px;">Published</span></span></div><div class="td col" style="left:1118.0px"><div class="l"><span class="lk" style="letter-spacing:0.201px;">Young</span></div><div class="l"><span class="lk" style="letter-spacing:-0.121px;">Shop</span></div></div><div class="td" style="left:1202.0px"><span class="ob b"><svg class="ic " width="20" height="20" viewBox="0 0 24 24" fill="none" stroke="currentColor" stroke-width="1.5" stroke-linecap="round" stroke-linejoin="round" style=""><path d="M7 7h-1a2 2 0 0 0 -2 2v9a2 2 0 0 0 2 2h9a2 2 0 0 0 2 -2v-1"/><path d="M20.385 6.585a2.100 2.100 0 0 0 -2.970 -2.970l-8.415 8.385v3h3l8.385 -8.415z"/><path d="M16 5l3 3"/></svg></span><span class="ob r"><svg class="ic " width="20" height="20" viewBox="0 0 24 24" fill="none" stroke="currentColor" stroke-width="1.5" stroke-linecap="round" stroke-linejoin="round" style=""><path d="M4 7l16 0"/><path d="M10 11l0 6"/><path d="M14 11l0 6"/><path d="M5 7l1 12a2 2 0 0 0 2 2h8a2 2 0 0 0 2 -2l1 -12"/><path d="M9 7v-3a1 1 0 0 1 1 -1h4a1 1 0 0 1 1 1v3"/></svg></span></div></div>
<div class="tr even" style="top:395px;height:74px"><div class="td" style="left:19px"><span class="cb"></span></div><div class="td" style="left:74.5px"><span>2<i style="margin:0 -1.40px 0 -0.93px">1</i></span></div><div class="td" style="left:122px"><span class="thumb"><span>600 x 600</span></span></div><div class="td col" style="left:196.2px"><div class="l"><span class="lk" style="letter-spacing:0.141px;">Chen Watermelon</span></div><div class="l"><span class="ty" style="letter-spacing:-0.113px;margin-left:0px;">— Physical</span></div></div><div class="td col" style="left:345.6px"><div class="l"><span style="letter-spacing:0.514px;">$503.00</span></div><div class="l"><span class="old">$<i style="margin:0 -0.75px 0 -0.50px">1</i>,3<i style="margin:0 -0.75px 0 -0.50px">1</i>6.00</span></div></div><div class="td" style="left:442.0px"><span class="ok" style="letter-spacing:0.219px;">In stock</span></div><div class="td" style="left:561.0px"><span style="letter-spacing:-0.300px;"><i style="margin:0 -1.56px 0 -1.04px">1</i>7</span></div><div class="td col" style="left:655.0px"><div class="l"><span style="letter-spacing:0.010px;">ZV-145</span></div></div><div class="td" style="left:736.0px"><span class="ed"><span>0</span></span></div><div class="td" style="left:842.1px"><span style="letter-spacing:0.503px;">2024-12-09</span></div><div class="td" style="left:999.0px"><span class="badge"><span style="letter-spacing:0.221px;">Published</span></span></div><div class="td col" style="left:1118.0px"><div class="l"><span class="lk" style="letter-spacing:-0.023px;">Global</span></div><div class="l"><span class="lk" style="letter-spacing:0.318px;">Office</span></div></div><div class="td" style="left:1202.0px"><span class="ob b"><svg class="ic " width="20" height="20" viewBox="0 0 24 24" fill="none" stroke="currentColor" stroke-width="1.5" stroke-linecap="round" stroke-linejoin="round" style=""><path d="M7 7h-1a2 2 0 0 0 -2 2v9a2 2 0 0 0 2 2h9a2 2 0 0 0 2 -2v-1"/><path d="M20.385 6.585a2.100 2.100 0 0 0 -2.970 -2.970l-8.415 8.385v3h3l8.385 -8.415z"/><path d="M16 5l3 3"/></svg></span><span class="ob r"><svg class="ic " width="20" height="20" viewBox="0 0 24 24" fill="none" stroke="currentColor" stroke-width="1.5" stroke-linecap="round" stroke-linejoin="round" style=""><path d="M4 7l16 0"/><path d="M10 11l0 6"/><path d="M14 11l0 6"/><path d="M5 7l1 12a2 2 0 0 0 2 2h8a2 2 0 0 0 2 -2l1 -12"/><path d="M9 7v-3a1 1 0 0 1 1 -1h4a1 1 0 0 1 1 1v3"/></svg></span></div></div>
<div class="tr odd" style="top:469px;height:106px"><div class="td" style="left:19px"><span class="cb"></span></div><div class="td" style="left:72.8px"><span style="letter-spacing:0.271px;">20</span></div><div class="td" style="left:122px"><span class="thumb"><span>600 x 600</span></span></div><div class="td col" style="left:196.2px"><div class="l"><span class="lk" style="letter-spacing:0.084px;">Perdue Simply</span></div><div class="l"><span class="lk" style="letter-spacing:0.098px;">Smart Organics</span></div><div class="l"><span class="lk" style="letter-spacing:-0.076px;">Gluten Free</span></div><div class="l"><span class="lk" style="letter-spacing:0.069px;">(Digital)</span><span class="ty" style="letter-spacing:-0.152px;margin-left:4.4px;">— Digital</span></div></div><div class="td col" style="left:345.6px"><div class="l"><span style="letter-spacing:0.564px;">$405.00</span></div><div class="l"><span class="old" style="letter-spacing:0.064px;">$621.00</span></div></div><div class="td" style="left:442.0px"><span class="ok" style="letter-spacing:0.219px;">In stock</span></div><div class="td" style="left:561.0px"><span><i style="margin:0 -1.40px 0 -0.93px">1</i>6</span></div><div class="td col" style="left:655.0px"><div class="l"><span style="letter-spacing:-0.154px;">SO-189</span></div></div><div class="td" style="left:736.0px"><span class="ed"><span>0</span></span></div><div class="td" style="left:842.1px"><span style="letter-spacing:0.503px;">2024-12-09</span></div><div class="td" style="left:999.0px"><span class="badge"><span style="letter-spacing:0.221px;">Published</span></span></div><div class="td col" style="left:1118.0px"><div class="l"><span class="lk" style="letter-spacing:-0.300px;">GoPro</span></div></div><div class="td" style="left:1202.0px"><span class="ob b"><svg class="ic " width="20" height="20" viewBox="0 0 24 24" fill="none" stroke="currentColor" stroke-width="1.5" stroke-linecap="round" stroke-linejoin="round" style=""><path d="M7 7h-1a2 2 0 0 0 -2 2v9a2 2 0 0 0 2 2h9a2 2 0 0 0 2 -2v-1"/><path d="M20.385 6.585a2.100 2.100 0 0 0 -2.970 -2.970l-8.415 8.385v3h3l8.385 -8.415z"/><path d="M16 5l3 3"/></svg></span><span class="ob r"><svg class="ic " width="20" height="20" viewBox="0 0 24 24" fill="none" stroke="currentColor" stroke-width="1.5" stroke-linecap="round" stroke-linejoin="round" style=""><path d="M4 7l16 0"/><path d="M10 11l0 6"/><path d="M14 11l0 6"/><path d="M5 7l1 12a2 2 0 0 0 2 2h8a2 2 0 0 0 2 -2l1 -12"/><path d="M9 7v-3a1 1 0 0 1 1 -1h4a1 1 0 0 1 1 1v3"/></svg></span></div></div>
<div class="tr even" style="top:575px;height:84px"><div class="td" style="left:19px"><span class="cb"></span></div><div class="td" style="left:73.8px"><span><i style="margin:0 -1.40px 0 -0.93px">1</i>9</span></div><div class="td" style="left:122px"><span class="thumb"><span>600 x 600</span></span></div><div class="td col" style="left:196.2px"><div class="l"><span class="lk" style="letter-spacing:0.124px;">Simply Lemonade</span></div><div class="l"><span class="lk" style="letter-spacing:0.177px;">with Raspberry</span></div><div class="l"><span class="lk" style="letter-spacing:0.387px;">Juice</span><span class="ty" style="letter-spacing:-0.202px;margin-left:4.3px;">— Physical</span></div></div><div class="td col" style="left:345.6px"><div class="l"><span>$<i style="margin:0 -0.55px 0 -0.37px">1</i><i style="margin:0 -0.55px 0 -0.37px">1</i>2.00</span></div><div class="l"><span class="old" style="letter-spacing:0.099px;">$1,068.00</span></div></div><div class="td" style="left:442.0px"><span class="ok" style="letter-spacing:0.219px;">In stock</span></div><div class="td" style="left:561.0px"><span style="letter-spacing:-0.300px;"><i style="margin:0 -1.56px 0 -1.04px">1</i>5</span></div><div class="td col" style="left:655.0px"><div class="l"><span>PX-<i style="margin:0 -0.78px 0 -0.52px">1</i><i style="margin:0 -0.78px 0 -0.52px">1</i>4</span></div></div><div class="td" style="left:736.0px"><span class="ed"><span>0</span></span></div><div class="td" style="left:842.1px"><span style="letter-spacing:0.503px;">2024-12-09</span></div><div class="td" style="left:999.0px"><span class="badge"><span style="letter-spacing:0.221px;">Published</span></span></div><div class="td col" style="left:1118.0px"><div class="l"><span class="lk" style="letter-spacing:-0.062px;">Robert’s</span></div><div class="l"><span class="lk" style="letter-spacing:-0.089px;">Store</span></div></div><div class="td" style="left:1202.0px"><span class="ob b"><svg class="ic " width="20" height="20" viewBox="0 0 24 24" fill="none" stroke="currentColor" stroke-width="1.5" stroke-linecap="round" stroke-linejoin="round" style=""><path d="M7 7h-1a2 2 0 0 0 -2 2v9a2 2 0 0 0 2 2h9a2 2 0 0 0 2 -2v-1"/><path d="M20.385 6.585a2.100 2.100 0 0 0 -2.970 -2.970l-8.415 8.385v3h3l8.385 -8.415z"/><path d="M16 5l3 3"/></svg></span><span class="ob r"><svg class="ic " width="20" height="20" viewBox="0 0 24 24" fill="none" stroke="currentColor" stroke-width="1.5" stroke-linecap="round" stroke-linejoin="round" style=""><path d="M4 7l16 0"/><path d="M10 11l0 6"/><path d="M14 11l0 6"/><path d="M5 7l1 12a2 2 0 0 0 2 2h8a2 2 0 0 0 2 -2l1 -12"/><path d="M9 7v-3a1 1 0 0 1 1 -1h4a1 1 0 0 1 1 1v3"/></svg></span></div></div>
<div class="tr odd" style="top:659px;height:106px"><div class="td" style="left:19px"><span class="cb"></span></div><div class="td" style="left:73.8px"><span><i style="margin:0 -0.56px 0 -0.37px">1</i>8</span></div><div class="td" style="left:122px"><span class="thumb"><span>600 x 600</span></span></div><div class="td col" style="left:196.2px"><div class="l"><span class="lk" style="letter-spacing:0.124px;">All Natural Italian-</span></div><div class="l"><span class="lk" style="letter-spacing:0.162px;">Style Chicken</span></div><div class="l"><span class="lk" style="letter-spacing:0.368px;">Meatballs</span></div><div class="l"><span class="ty" style="letter-spacing:-0.113px;margin-left:0px;">— Physical</span></div></div><div class="td col" style="left:345.6px"><div class="l"><span style="letter-spacing:0.564px;">$332.00</span></div><div class="l"><span class="old" style="letter-spacing:-0.063px;">$1,025.00</span></div></div><div class="td" style="left:442.0px"><span class="ok" style="letter-spacing:0.219px;">In stock</span></div><div class="td" style="left:561.0px"><span><i style="margin:0 -1.40px 0 -0.93px">1</i>6</span></div><div class="td col" style="left:655.0px"><div class="l"><span style="letter-spacing:0.129px;">B4-154</span></div></div><div class="td" style="left:736.0px"><span class="ed"><span>0</span></span></div><div class="td" style="left:842.1px"><span style="letter-spacing:0.503px;">2024-12-09</span></div><div class="td" style="left:999.0px"><span class="badge"><span style="letter-spacing:0.221px;">Published</span></span></div><div class="td col" style="left:1118.0px"><div class="l"><span class="lk" style="letter-spacing:-0.062px;">Robert’s</span></div><div class="l"><span class="lk" style="letter-spacing:-0.089px;">Store</span></div></div><div class="td" style="left:1202.0px"><span class="ob b"><svg class="ic " width="20" height="20" viewBox="0 0 24 24" fill="none" stroke="currentColor" stroke-width="1.5" stroke-linecap="round" stroke-linejoin="round" style=""><path d="M7 7h-1a2 2 0 0 0 -2 2v9a2 2 0 0 0 2 2h9a2 2 0 0 0 2 -2v-1"/><path d="M20.385 6.585a2.100 2.100 0 0 0 -2.970 -2.970l-8.415 8.385v3h3l8.385 -8.415z"/><path d="M16 5l3 3"/></svg></span><span class="ob r"><svg class="ic " width="20" height="20" viewBox="0 0 24 24" fill="none" stroke="currentColor" stroke-width="1.5" stroke-linecap="round" stroke-linejoin="round" style=""><path d="M4 7l16 0"/><path d="M10 11l0 6"/><path d="M14 11l0 6"/><path d="M5 7l1 12a2 2 0 0 0 2 2h8a2 2 0 0 0 2 -2l1 -12"/><path d="M9 7v-3a1 1 0 0 1 1 -1h4a1 1 0 0 1 1 1v3"/></svg></span></div></div>
</div>
<div class="wm" style="top:760.3px;font-size:19.6px"><span style="letter-spacing:0.122px;">Activate Windows</span></div>
<div class="wm" style="top:784.5px;font-size:14.6px"><span style="letter-spacing:0.133px;">Go to Settings to activate Windows.</span></div>
<div id="dbg"><span>Debug Mode</span></div>
<div id="scr"><i></i></div>
</body>
</html>
